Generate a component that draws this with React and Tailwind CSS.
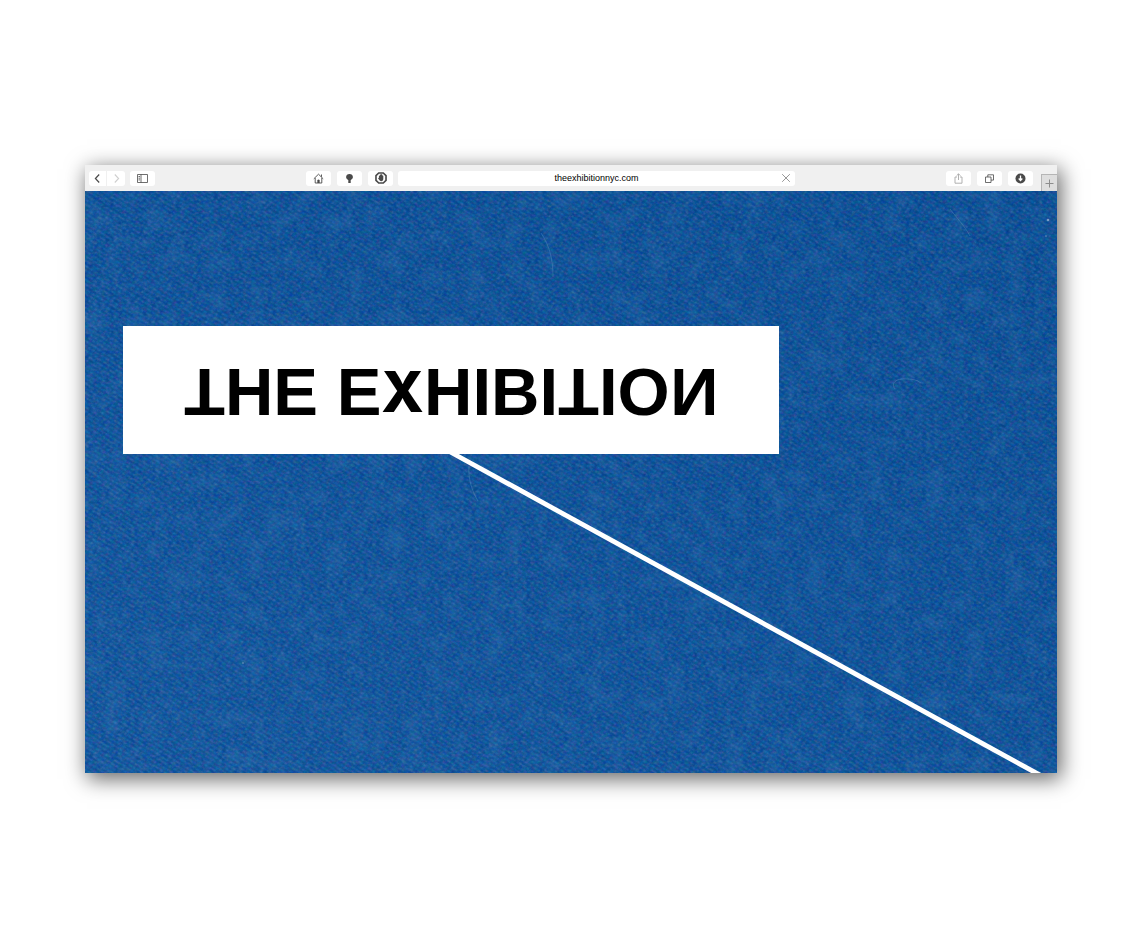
import React, { useState } from 'react';

const BTN = 'flex h-[15px] w-[25px] shrink-0 items-center justify-center rounded-[3px] bg-white text-[#4a4a4a]';

function ToolButton({ label, className, children }) {
  return (
    <button type="button" aria-label={label} className={`${BTN} ${className || ''}`}>
      {children}
    </button>
  );
}

function Icon({ children, size = 11 }) {
  return (
    <svg width={size} height={size} viewBox="0 0 11 11" fill="none" stroke="currentColor" strokeWidth="1" aria-hidden="true">
      {children}
    </svg>
  );
}

function Toolbar() {
  const [url, setUrl] = useState('theexhibitionnyc.com');
  return (
    <header className="flex h-[26px] items-center bg-[#f0f0f0] pl-1">
      <div className="flex gap-px">
        <button type="button" aria-label="Back" className="flex h-[15px] w-[17px] items-center justify-center rounded-l-[3px] bg-white text-[#4a4a4a]">
          <Icon><path d="M7.2 1.5 3.4 5.5l3.8 4" strokeWidth="1.2" /></Icon>
        </button>
        <button type="button" aria-label="Forward" className="flex h-[15px] w-[18px] items-center justify-center rounded-r-[3px] bg-white text-[#cfcfcf]">
          <Icon><path d="M3.8 1.5l3.8 4-3.8 4" strokeWidth="1.1" /></Icon>
        </button>
      </div>
      <ToolButton label="Show sidebar" className="ml-[5px]">
        <Icon><path d="M.5 1.5h10v8H.5zM4 1.5v8M1.5 3.5H3M1.5 5.2H3M1.5 6.9H3" strokeWidth=".8" /></Icon>
      </ToolButton>

      <div className="flex-1" />

      <div className="flex gap-[6px]">
        <ToolButton label="Home">
          <Icon>
            <path d="M.8 5.8 5.5 1.2l4.7 4.6M2.2 5v5h6.6V5M8.5 1.5v2.3" strokeWidth=".9" />
            <path d="M4.8 10V7h1.4v3" fill="currentColor" strokeWidth=".8" />
          </Icon>
        </ToolButton>
        <ToolButton label="Notes">
          <Icon>
            <path d="M5.5 1a3.4 3.2 0 0 1 3.4 3c0 1.3-1 2.1-1.9 2.9H4C3.1 6.1 2.1 5.3 2.1 4a3.4 3.2 0 0 1 3.4-3zM4.3 6.9h2.4v3H4.3z" fill="currentColor" stroke="none" />
          </Icon>
        </ToolButton>
        <ToolButton label="Block content">
          <Icon size={12}>
            <path d="M3.4.9h4.2l2.5 2.5v4.2l-2.5 2.5H3.4L.9 7.6V3.4z" strokeWidth="1.5" />
            <path d="M2.9 5.5l.7-.3V3.5h.8v-1h.8v-.6h.9v.6h.8v.9h.7v2.6c0 1.6-.7 2.5-1.800 2.500-1.100 0-1.700-.9-3.100-3z" fill="currentColor" stroke="none" />
          </Icon>
        </ToolButton>
      </div>

      <div className="relative ml-[5px] w-[41%]">
        <input
          type="text"
          aria-label="Address"
          value={url}
          onChange={(e) => setUrl(e.target.value)}
          className="block h-[15px] w-full rounded-[3px] bg-white text-center font-['Liberation_Sans',sans-serif] text-[9px] leading-[15px] text-black outline-none"
        />
        <button type="button" aria-label="Stop loading" className="absolute top-0 right-1 flex h-[15px] items-center text-[#8c8c8c]">
          <Icon size={10}><path d="M1.3 1.3l8.4 8.4M9.7 1.3 1.3 9.7" strokeWidth="1" /></Icon>
        </button>
      </div>

      <div className="flex-1" />

      <div className="flex gap-[6px]">
        <ToolButton label="Share">
          <span className="text-[#a8a8a8]">
            <Icon><path d="M4 4H2v6.2h7V4H7M5.5 7V.9M3.6 2.7 5.5.8l1.9 1.9" strokeWidth=".9" /></Icon>
          </span>
        </ToolButton>
        <ToolButton label="Show all tabs">
          <Icon><path d="M1.5 4H7v5.5H1.5zM3.8 4V1.8h5.7v5.3H7" strokeWidth=".8" /></Icon>
        </ToolButton>
        <ToolButton label="Downloads">
          <Icon>
            <circle cx="5.5" cy="5.5" r="5" fill="currentColor" stroke="none" />
            <path d="M5.5 2.5V7M3.7 5.5l1.8 2 1.8-2" stroke="#fff" strokeWidth="1.3" />
          </Icon>
        </ToolButton>
      </div>
      <button type="button" aria-label="New tab" className="ml-2 flex h-[17px] w-4 items-center justify-center self-end border-t border-l border-[#b5b5b5] bg-[#dedede] text-[#8c8c8c]">
        <Icon><path d="M5.5 1.5v8M1.5 5.5h8" strokeWidth="1" /></Icon>
      </button>
    </header>
  );
}

// Blue book cloth with a diagonal weave and a white thread running off the sign
function Cloth() {
  return (
    <svg className="absolute inset-0 h-full w-full" viewBox="0 0 972 582" preserveAspectRatio="none" aria-hidden="true">
      <defs>
        <linearGradient id="dye" x1="0" y1="1" x2="1" y2="0">
          <stop offset="0" stopColor="#1a62ab" />
          <stop offset=".55" stopColor="#0e569f" />
          <stop offset="1" stopColor="#085098" />
        </linearGradient>
        <pattern id="weave" width="5" height="4" patternUnits="userSpaceOnUse" patternTransform="rotate(32)">
          <path d="M0 1h5" stroke="#003b80" strokeWidth="1.4" opacity=".3" />
          <path d="M1 3h2" stroke="#3f83bd" strokeWidth="1.2" opacity=".28" />
        </pattern>
        <filter id="grain" x="0" y="0" width="100%" height="100%" colorInterpolationFilters="sRGB">
          <feTurbulence type="fractalNoise" baseFrequency=".24 .3" numOctaves="3" seed="8" />
          <feColorMatrix values=".75 0 0 0 -.28  0 .45 0 0 .1  0 0 .4 0 .39  0 0 0 0 .5" />
        </filter>
        <filter id="mottle" x="0" y="0" width="100%" height="100%" colorInterpolationFilters="sRGB">
          <feTurbulence type="fractalNoise" baseFrequency=".05" numOctaves="5" seed="3" />
          <feColorMatrix values="0 0 0 0 .3  0 0 0 0 .55  0 0 0 0 .75  1.2 0 0 0 -.52" />
        </filter>
      </defs>
      <rect width="972" height="582" fill="url(#dye)" />
      <rect width="972" height="582" filter="url(#grain)" />
      <rect width="972" height="582" fill="url(#weave)" />
      <rect width="972" height="582" filter="url(#mottle)" opacity=".4" />
      <g fill="none" stroke="#6e9bc4" strokeWidth="1" opacity=".35">
        <path d="M384 275c-1 13 3 25 9 35" />
        <path d="M810 198c-5-7 3-11 12-10 6 0 10 1 14 4" />
        <path d="M865 18c6 8 14 16 20 27" />
        <path d="M456 42c8 12 12 25 12 44" />
      </g>
      <g fill="#9bbdd9" opacity=".7">
        <circle cx="963" cy="29" r="1.3" />
        <circle cx="961" cy="45" r=".8" />
        <circle cx="158" cy="472" r=".8" />
      </g>
      <path d="M358 257 964 589" stroke="#fff" strokeWidth="4.8" />
    </svg>
  );
}

function Sign() {
  return (
    <div className="relative mt-[135px] ml-[38px] flex h-32 w-[67.5%] items-center justify-center bg-white pt-1">
      <h1 className="flex items-baseline font-['Liberation_Sans',sans-serif] text-[67px] leading-[72px] font-bold whitespace-pre text-black">
        <span className="rotate-180">T</span>
        <span>HE E</span>
        <span className="self-center font-['Inter',sans-serif] text-[56px] font-extrabold">X</span>
        <span>HIBI</span>
        <span className="rotate-180">T</span>
        <span>IO</span>
        <span className="-scale-x-100">N</span>
      </h1>
    </div>
  );
}

export default function App() {
  return (
    <div className="min-h-screen bg-white pt-[165px] pr-[83px] pb-[152px] pl-[85px]">
      <div className="shadow-[3px_5px_20px_1px_rgba(0,0,0,0.6)]">
        <Toolbar />
        <main className="relative flex aspect-[972/582] items-start overflow-hidden bg-[#0d5299]">
          <Cloth />
          <Sign />
        </main>
      </div>
    </div>
  );
}
